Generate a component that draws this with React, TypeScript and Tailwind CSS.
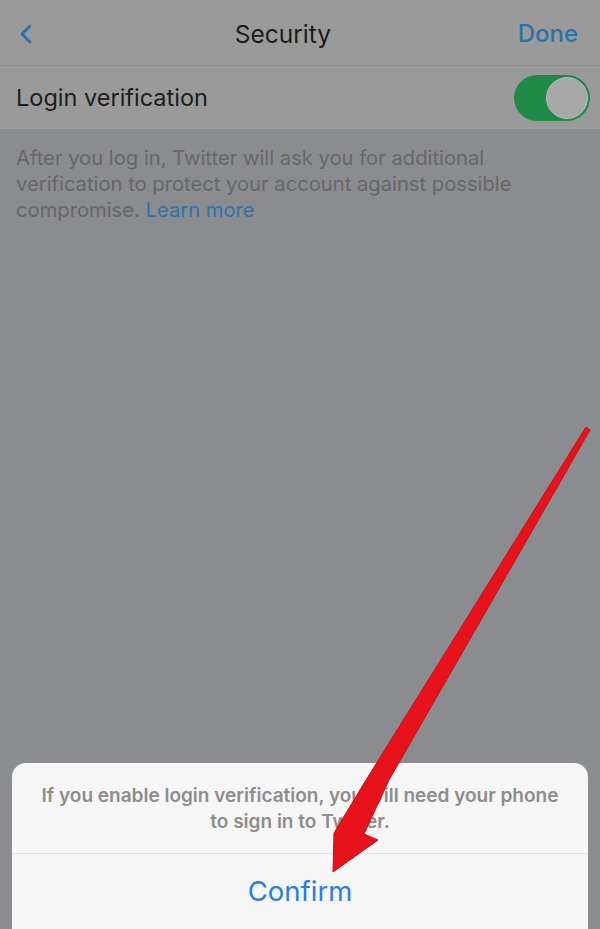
import { ChevronLeft } from 'lucide-react';

function Toggle() {
  return (
    <div className="relative w-[76px] h-[46px] rounded-full bg-[#1e8a46]">
      <div className="absolute right-[2px] top-[2px] w-[42px] h-[42px] rounded-full bg-[#a8a8a8] border border-[#b6bdb8]" />
    </div>
  );
}

function Arrow() {
  return (
    <svg className="absolute inset-0 pointer-events-none" width="600" height="929" viewBox="0 0 600 929">
      <polygon
        points="586,427 590,430 389,780 364,834 378,840 333,872 334,833 366,780"
        fill="#e8121a"
        stroke="#c80f16"
        strokeWidth="1"
        strokeLinejoin="round"
      />
    </svg>
  );
}

export default function App() {
  return (
    <div className="relative w-[600px] h-[929px] overflow-hidden bg-[#8b8c8f] font-['Inter',sans-serif]">
      <div className="h-[66px] pt-[3px] bg-[#9a9a9a] border-b border-[#8f8f8f] flex items-center justify-between px-[10px]">
        <ChevronLeft className="text-[#2a6fa8]" size={32} strokeWidth={2} />
        <h1 className="text-[24.5px] text-[#1c1c1c] pl-[6px]">Security</h1>
        <span className="text-[24px] font-medium text-[#2a72ae] pr-[12px]">Done</span>
      </div>

      <div className="h-[63px] bg-[#9a9a9a] flex items-center justify-between pl-4 pr-[10px]">
        <span className="text-[23.5px] text-[#1c1c1c]">Login verification</span>
        <Toggle />
      </div>

      <p className="pl-4 pt-[16px] w-[540px] text-[20.2px] leading-[26px] text-[#666769]">
        After you log in, Twitter will ask you for additional verification to protect your account against possible
        compromise. <span className="text-[#2f73a8]">Learn more</span>
      </p>

      <div className="absolute left-[12px] right-[12px] top-[763px] h-[190px] rounded-[14px] bg-[#f6f6f6]">
        <p className="px-[12px] pt-[20px] pb-[18px] text-center text-[19px] leading-[26px] font-semibold text-[#8d8d8d]">
          If you enable login verification, you will need your phone
          <br />
          to sign in to Twitter.
        </p>
        <div className="border-t border-[#e4e4e4] h-[76px] flex items-center justify-center">
          <span className="text-[27.5px] text-[#2a7de3]">Confirm</span>
        </div>
      </div>

      <Arrow />
    </div>
  );
}
